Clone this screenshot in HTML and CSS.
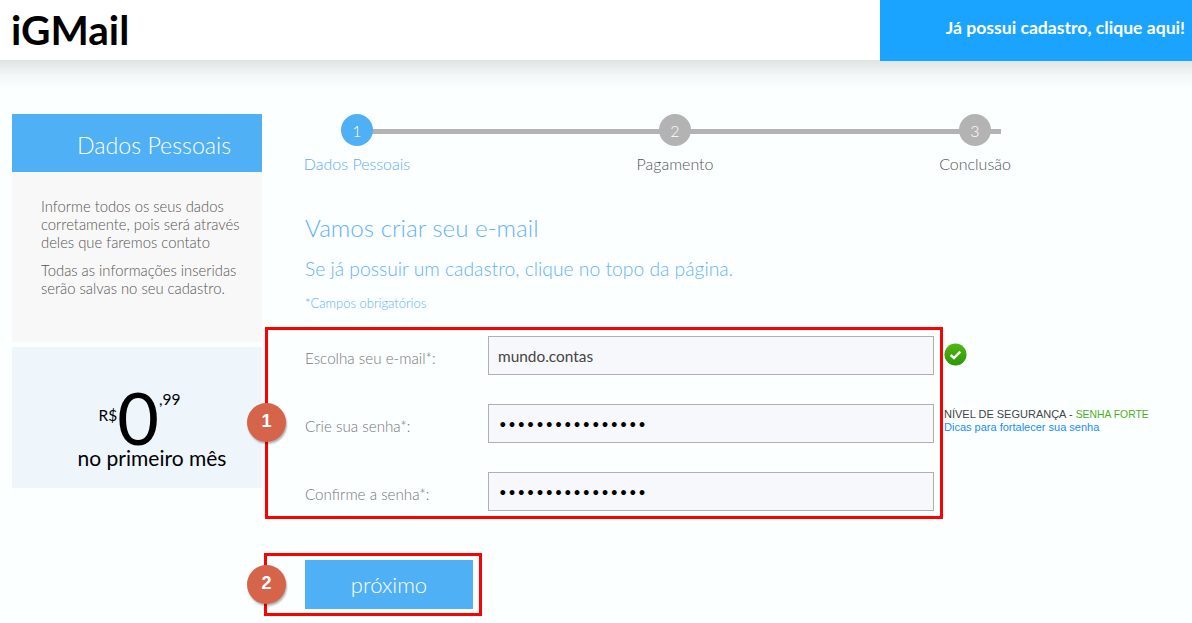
FILE: index.html
```html
<!DOCTYPE html>
<html lang="pt-BR">
<head>
    <meta charset="UTF-8">
    <meta name="viewport" content="width=device-width, initial-scale=1.0">
    <title>iGMail - Cadastro</title>
    <link rel="stylesheet" href="styles.css">
</head>
<body>
    <header class="top-bar">
        <div class="logo">iGMail</div>
        <a class="login-link" href="#">Já possui cadastro, clique aqui!</a>
    </header>

    <main class="page">
        <aside class="sidebar">
            <h2 class="side-title">Dados Pessoais</h2>
            <div class="side-info">
                <p>Informe todos os seus dados corretamente, pois será através deles que faremos contato</p>
                <p>Todas as informações inseridas serão salvas no seu cadastro.</p>
            </div>
            <div class="promo">
                <div class="price"><span class="currency">R$</span><span class="amount">0</span><span class="cents">,99</span></div>
                <div class="promo-text">no primeiro mês</div>
            </div>
        </aside>

        <section class="content">
            <div class="steps">
                <div class="step active">
                    <div class="step-num">1</div>
                    <div class="step-name">Dados Pessoais</div>
                </div>
                <div class="step">
                    <div class="step-num">2</div>
                    <div class="step-name">Pagamento</div>
                </div>
                <div class="step">
                    <div class="step-num">3</div>
                    <div class="step-name">Conclusão</div>
                </div>
            </div>

            <h1 class="title">Vamos criar seu e-mail</h1>
            <p class="subtitle">Se já possuir um cadastro, clique no topo da página.</p>
            <p class="required">*Campos obrigatórios</p>

            <div class="form-area">
                <form class="mark-box form-box">
                    <span class="badge">1</span>
                    <div class="form-row">
                        <label for="email">Escolha seu e-mail*:</label>
                        <input id="email" type="text" value="mundo.contas">
                    </div>
                    <div class="form-row">
                        <label for="senha">Crie sua senha*:</label>
                        <input id="senha" type="password" value="abcdefghijklmnop">
                    </div>
                    <div class="form-row">
                        <label for="confirma">Confirme a senha*:</label>
                        <input id="confirma" type="password" value="abcdefghijklmnop">
                    </div>
                </form>
                <div class="form-hints">
                    <div class="check-row">
                        <svg class="check-icon" width="23" height="23" viewBox="0 0 24 24">
                            <defs>
                                <linearGradient id="greenFill" x1="0" y1="0" x2="0" y2="1">
                                    <stop offset="0" stop-color="#52b814"/>
                                    <stop offset="1" stop-color="#2c9606"/>
                                </linearGradient>
                            </defs>
                            <circle cx="12" cy="12" r="11.5" fill="url(#greenFill)"/>
                            <path d="M7 12.5l3.4 3.2L17 9" fill="none" stroke="#fff" stroke-width="2.6"/>
                        </svg>
                    </div>
                    <div class="security">
                        <div>NÍVEL DE SEGURANÇA - <span class="strong">SENHA FORTE</span></div>
                        <a href="#">Dicas para fortalecer sua senha</a>
                    </div>
                </div>
            </div>

            <div class="mark-box button-box">
                <span class="badge">2</span>
                <button class="next-btn" type="button">próximo</button>
            </div>
        </section>
    </main>
</body>
</html>
```

FILE: styles.css
```css
html, body {
    margin: 0;
    padding: 0;
}

body {
    font-family: 'Lato', sans-serif;
    font-weight: 300;
    background-color: #fbffff;
    height: 623px;
    overflow: hidden;
}

/* Top bar */
.top-bar {
    height: 60px;
    background-color: white;
    display: flex;
    justify-content: space-between;
    position: relative;
}

.top-bar::after {
    content: "";
    position: absolute;
    top: 60px;
    left: 0;
    right: 0;
    height: 30px;
    background: linear-gradient(#dfe3e4, #f3f7f7 50%, #fbffff);
}

.logo {
    font-size: 40.6px;
    font-weight: 700;
    color: black;
    padding-left: 11px;
    line-height: 60px;
}

.login-link {
    width: 312px;
    height: 61px;
    box-sizing: border-box;
    padding-right: 7px;
    background-color: #1aa3ff;
    color: white;
    font-size: 17.6px;
    font-weight: 700;
    line-height: 55px;
    text-align: right;
    text-decoration: none;
    position: relative;
    z-index: 1;
}

/* Layout */
.page {
    display: flex;
    padding: 54px 0 0 12px;
}

.sidebar {
    width: 250px;
    flex-shrink: 0;
    position: relative;
}

.side-title {
    margin: 0;
    height: 58px;
    background-color: #4fb0f6;
    color: white;
    font-size: 23.2px;
    font-weight: 300;
    line-height: 62px;
    padding-left: 65px;
    box-sizing: border-box;
}

.side-info {
    height: 170px;
    box-sizing: border-box;
    padding: 25px 15px 0 29px;
    background-color: #f9f8f8;
    color: #555;
    font-size: 14.8px;
    line-height: 18px;
}

.side-info p {
    margin: 0 0 10px;
}

.promo {
    margin-top: 5px;
    height: 141px;
    background-color: #eef5fb;
    color: black;
    text-align: center;
    box-sizing: border-box;
    padding: 40px 0 0 30px;
    font-weight: 400;
}

.price {
    display: flex;
    justify-content: center;
    height: 58px;
    padding-right: 25px;
}

.currency {
    font-size: 15.5px;
    margin-top: 19px;
}

.amount {
    font-size: 72px;
    line-height: 60px;
    font-weight: 400;
    height: 58px;
}

.cents {
    font-size: 15.5px;
    margin-top: 3px;
}

.promo-text {
    font-size: 21px;
    line-height: 26px;
}

.content {
    padding-left: 43px;
    flex: 1;
    position: relative;
}

/* Steps */
.steps {
    display: flex;
    position: relative;
    width: 722px;
    margin-bottom: 40px;
}

.steps::before {
    content: "";
    position: absolute;
    top: 15px;
    left: 52px;
    width: 644px;
    height: 5px;
    background-color: #b3b3b3;
}

.step {
    width: 104px;
    text-align: center;
    position: relative;
    color: #555;
    font-size: 16px;
}

.step:nth-child(2) {
    margin-left: 214px;
}

.step:nth-child(3) {
    margin-left: 196px;
}

.step-num {
    width: 32px;
    height: 32px;
    margin: 0 auto 9px;
    border-radius: 50%;
    background-color: #b3b3b3;
    color: white;
    font-size: 16px;
    line-height: 34px;
}

.step.active .step-num {
    background-color: #4fb0f6;
}

.step.active .step-name {
    color: #66aaf5;
}

.step-name {
    line-height: 18px;
    white-space: nowrap;
    display: flex;
    justify-content: center;
}

/* Headings */
.title {
    margin: 0;
    color: #66b1fb;
    font-size: 24.2px;
    font-weight: 300;
    line-height: 30px;
}

.subtitle {
    margin: 14px 0 0;
    color: #66b1fb;
    font-size: 19.3px;
    line-height: 24px;
}

.required {
    margin: 14px 0 0;
    color: #5fb0ef;
    font-size: 13px;
    line-height: 16px;
}

/* Form */
.form-area {
    display: flex;
    margin: 16px 0 0 -40px;
}

.mark-box {
    border: 3px solid #ff0000;
    box-sizing: border-box;
    position: relative;
}

.form-box {
    width: 678px;
    height: 192px;
    padding: 6px 6px 0 37px;
    display: flex;
    flex-direction: column;
    gap: 29px;
}

.form-row {
    display: flex;
    align-items: center;
    height: 39px;
}

.form-row label {
    width: 183px;
    color: #777;
    font-size: 15.2px;
    padding-top: 4px;
}

.form-row input {
    flex: 1;
    height: 39px;
    box-sizing: border-box;
    border: 1px solid #b0b0b0;
    background-color: #f6f8fb;
    padding: 0 9px;
    font-family: 'Lato', sans-serif;
    font-size: 15.4px;
    color: #444;
    outline: none;
}

.form-row input[type="password"] {
    font-size: 13px;
    letter-spacing: 1.75px;
    padding-left: 10px;
    color: black;
}

.badge {
    position: absolute;
    left: -21px;
    width: 39px;
    height: 39px;
    border-radius: 50%;
    background-color: #d6644a;
    box-shadow: 1px 2px 2px rgba(0, 0, 0, 0.3);
    color: white;
    font-family: 'Liberation Sans', sans-serif;
    font-size: 18px;
    font-weight: 700;
    line-height: 36px;
    text-align: center;
}

.form-box .badge {
    top: 73px;
}

.form-hints {
    padding-left: 1px;
    font-family: 'Liberation Sans', sans-serif;
    font-size: 11px;
    line-height: 12px;
    font-weight: 400;
    color: #444;
}

.check-row {
    height: 74px;
    padding-top: 16px;
    box-sizing: border-box;
}

.check-icon {
    display: block;
}

.security {
    padding-top: 7px;
}

.security a {
    display: block;
    color: #1a8cff;
    text-decoration: none;
}

.strong {
    color: #4fb01a;
    font-size: 10.4px;
}

/* Next button */
.button-box {
    width: 218px;
    height: 63px;
    margin: 34px 0 0 -41px;
    padding: 4px 0 0 38px;
}

.button-box .badge {
    top: 9px;
    left: -20px;
}

.next-btn {
    display: block;
    width: 168px;
    height: 49px;
    border: none;
    background-color: #4fb0f6;
    color: white;
    font-family: 'Lato', sans-serif;
    font-size: 22px;
    font-weight: 300;
    cursor: pointer;
}
```
